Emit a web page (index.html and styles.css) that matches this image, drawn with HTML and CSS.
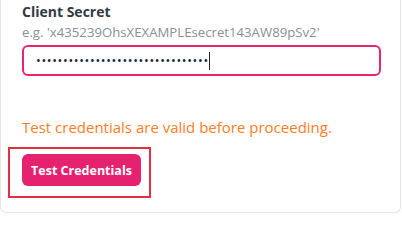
FILE: index.html
```html
<!DOCTYPE html>
<html>
<head>
<meta charset="utf-8">
<link rel="stylesheet" href="styles.css">
</head>
<body>
<div class="card">
  <div class="field">
    <label class="label">Client Secret</label>
    <div class="hint">e.g. 'x435239OhsXEXAMPLEsecret143AW89pSv2'</div>
    <div class="input"><span class="dots">••••••••••••••••••••••••••••••••</span><span class="caret"></span></div>
  </div>
  <p class="notice">Test credentials are valid before proceeding.</p>
  <div class="highlight">
    <button class="btn">Test Credentials</button>
  </div>
</div>
</body>
</html>
```
FILE: styles.css
```css
html, body {
  margin: 0;
  padding: 0;
  background: #ffffff;
}
body {
  font-family: "Open Sans", "Noto Sans", sans-serif;
}
.card {
  box-sizing: border-box;
  width: 401px;
  height: 213px;
  border: 1px solid #e2e5ea;
  border-top: none;
  border-radius: 0 0 6px 6px;
  padding: 3px 0 0 21px;
}
.field {
  display: flex;
  flex-direction: column;
}
.label {
  font-size: 14px;
  font-weight: 700;
  color: #333a44;
  line-height: 18px;
}
.hint {
  font-size: 13.2px;
  color: #8a8f96;
  line-height: 18px;
  margin-top: 2px;
}
.input {
  box-sizing: border-box;
  width: 359px;
  height: 31px;
  margin-top: 4px;
  border: 2px solid #e8256f;
  border-radius: 6px;
  display: flex;
  align-items: center;
  padding-left: 12px;
}
.dots {
  font-size: 12.5px;
  letter-spacing: 0.7px;
  color: #14213d;
}
.caret {
  width: 1px;
  height: 18px;
  background: #222;
  margin-left: 0;
}
.notice {
  margin: 41px 0 0 0;
  font-size: 15px;
  color: #ff7d1f;
  line-height: 20px;
}
.highlight {
  box-sizing: border-box;
  width: 143px;
  height: 51px;
  margin: 10px 0 0 -14px;
  border: 2px solid #e1303f;
  padding: 5px 0 0 12px;
}
.btn {
  box-sizing: border-box;
  width: 119px;
  height: 32px;
  border: none;
  border-radius: 6px;
  background: #e5226f;
  color: #ffffff;
  font-family: "Open Sans", "Noto Sans", sans-serif;
  font-size: 12.5px;
  font-weight: 700;
  padding: 0;
}
```
